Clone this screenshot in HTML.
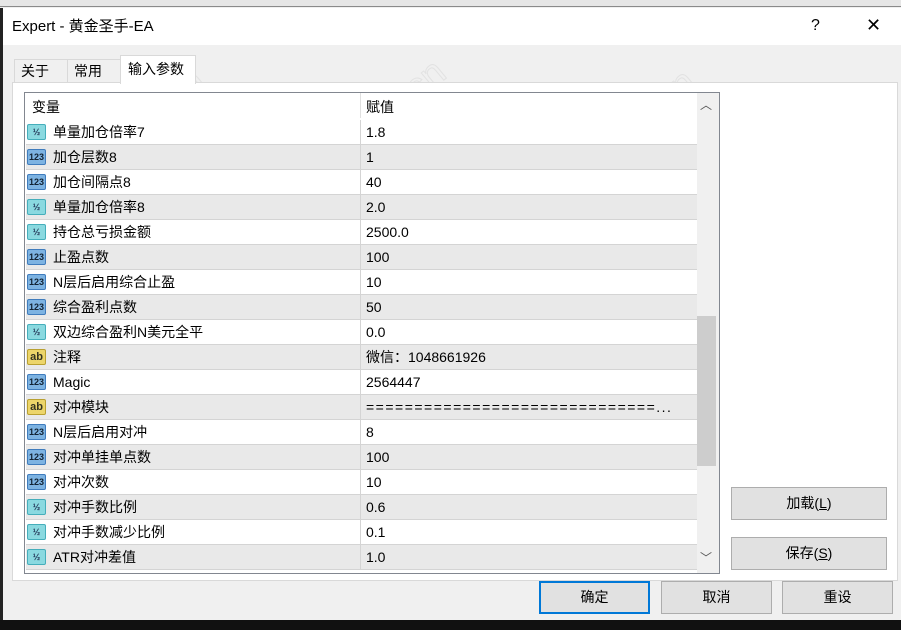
<!DOCTYPE html>
<html><head><meta charset="utf-8"><style>
*{box-sizing:border-box;margin:0;padding:0}
html,body{width:901px;height:630px;overflow:hidden}
body{position:relative;background:#f0f0f0;font-family:"Liberation Sans","Noto Sans CJK SC",sans-serif;font-size:14px;color:#000;line-height:1.2}
.abs{position:absolute}
.wm{position:absolute;font-size:38px;font-family:"Liberation Sans",sans-serif;color:transparent;-webkit-text-stroke:1px #e2e2e2;transform:rotate(-40deg);white-space:nowrap;pointer-events:none}
.row{position:absolute;left:26px;width:671px;height:25px;border-bottom:1px solid #d4d4d4;line-height:24px}
.row.g{background:#e9e9e9}
.row .n{position:absolute;left:27px;top:0;white-space:nowrap}
.row .v{position:absolute;left:340px;top:0;white-space:nowrap}
.row .d{position:absolute;left:334px;top:0;width:1px;height:25px;background:#d4d4d4}
.ic{position:absolute;left:1px;top:4px;width:19px;height:16px;border-radius:2px;font-size:9px;font-weight:bold;text-align:center;line-height:14px;font-family:"Liberation Sans",sans-serif}
.h{background:#8ad9e0;border:1px solid #45aebb;color:#235}
.n1{background:#7db3e2;border:1px solid #3f7cbd;color:#123}
.ab{background:#ecd56a;border:1px solid #b9a030;color:#332;font-size:11px}
.btn{position:absolute;background:#e1e1e1;border:1px solid #adadad;text-align:center;line-height:30px;font-size:14px}
.t{position:absolute;line-height:20px;white-space:nowrap}
</style></head><body>
<div class="wm" style="left:50px;top:110px">EAHub.cn</div>
<div class="wm" style="left:290px;top:100px">EAHub.cn</div>
<div class="wm" style="left:540px;top:110px">EAHub.cn</div>
<div class="wm" style="left:770px;top:110px">EAHub</div>
<div class="abs" style="left:0;top:0;width:901px;height:7px;background:#e6e6e6;border-bottom:1px solid #8a8a8a"></div>
<div class="abs" style="left:0;top:8px;width:3px;height:622px;background:#222"></div>
<div class="abs" style="left:3px;top:8px;width:898px;height:37px;background:#fff"></div>
<div class="t" style="left:12px;top:17px;font-size:15px">Expert - 黄金圣手-EA</div>
<div class="t" style="left:811px;top:16px;font-size:16px">?</div>
<div class="t" style="left:866px;top:15px;font-size:18px;font-weight:200">✕</div>
<div class="abs" style="left:14px;top:59px;width:54px;height:24px;border:1px solid #d9d9d9;border-bottom:none;background:#f0f0f0"></div>
<div class="t" style="left:21px;top:61px">关于</div>
<div class="abs" style="left:67px;top:59px;width:54px;height:24px;border:1px solid #d9d9d9;border-bottom:none;background:#f0f0f0"></div>
<div class="t" style="left:74px;top:61px">常用</div>
<div class="abs" style="left:12px;top:82px;width:886px;height:499px;background:#fff;border:1px solid #d9d9d9"></div>
<div class="abs" style="left:120px;top:55px;width:76px;height:29px;background:#fff;border:1px solid #d9d9d9;border-bottom:none"></div>
<div class="t" style="left:128px;top:59px">输入参数</div>
<div class="abs" style="left:24px;top:92px;width:696px;height:482px;border:1px solid #828790;background:#fff"></div>
<div class="t" style="left:32px;top:97px">变量</div>
<div class="abs" style="left:360px;top:93px;width:1px;height:25px;background:#e0e0e0"></div>
<div class="t" style="left:366px;top:97px">赋值</div>
<div class="row" style="top:120px"><span class="ic h">½</span><span class="n">单量加仓倍率7</span><span class="d"></span><span class="v">1.8</span></div>
<div class="row g" style="top:145px"><span class="ic n1">123</span><span class="n">加仓层数8</span><span class="d"></span><span class="v">1</span></div>
<div class="row" style="top:170px"><span class="ic n1">123</span><span class="n">加仓间隔点8</span><span class="d"></span><span class="v">40</span></div>
<div class="row g" style="top:195px"><span class="ic h">½</span><span class="n">单量加仓倍率8</span><span class="d"></span><span class="v">2.0</span></div>
<div class="row" style="top:220px"><span class="ic h">½</span><span class="n">持仓总亏损金额</span><span class="d"></span><span class="v">2500.0</span></div>
<div class="row g" style="top:245px"><span class="ic n1">123</span><span class="n">止盈点数</span><span class="d"></span><span class="v">100</span></div>
<div class="row" style="top:270px"><span class="ic n1">123</span><span class="n">N层后启用综合止盈</span><span class="d"></span><span class="v">10</span></div>
<div class="row g" style="top:295px"><span class="ic n1">123</span><span class="n">综合盈利点数</span><span class="d"></span><span class="v">50</span></div>
<div class="row" style="top:320px"><span class="ic h">½</span><span class="n">双边综合盈利N美元全平</span><span class="d"></span><span class="v">0.0</span></div>
<div class="row g" style="top:345px"><span class="ic ab">ab</span><span class="n">注释</span><span class="d"></span><span class="v">微信：1048661926</span></div>
<div class="row" style="top:370px"><span class="ic n1">123</span><span class="n">Magic</span><span class="d"></span><span class="v">2564447</span></div>
<div class="row g" style="top:395px"><span class="ic ab">ab</span><span class="n">对冲模块</span><span class="d"></span><span class="v" style="letter-spacing:1.5px">==============================...</span></div>
<div class="row" style="top:420px"><span class="ic n1">123</span><span class="n">N层后启用对冲</span><span class="d"></span><span class="v">8</span></div>
<div class="row g" style="top:445px"><span class="ic n1">123</span><span class="n">对冲单挂单点数</span><span class="d"></span><span class="v">100</span></div>
<div class="row" style="top:470px"><span class="ic n1">123</span><span class="n">对冲次数</span><span class="d"></span><span class="v">10</span></div>
<div class="row g" style="top:495px"><span class="ic h">½</span><span class="n">对冲手数比例</span><span class="d"></span><span class="v">0.6</span></div>
<div class="row" style="top:520px"><span class="ic h">½</span><span class="n">对冲手数减少比例</span><span class="d"></span><span class="v">0.1</span></div>
<div class="row g" style="top:545px"><span class="ic h">½</span><span class="n">ATR对冲差值</span><span class="d"></span><span class="v">1.0</span></div>
<div class="abs" style="left:697px;top:93px;width:22px;height:480px;background:#f0f0f0"></div>
<div class="abs" style="left:697px;top:316px;width:19px;height:150px;background:#cdcdcd"></div>
<div class="t" style="left:700px;top:95px;font-size:12px;color:#555">︿</div>
<div class="t" style="left:700px;top:548px;font-size:12px;color:#555">﹀</div>
<div class="btn" style="left:731px;top:487px;width:156px;height:33px">加载(<u>L</u>)</div>
<div class="btn" style="left:731px;top:537px;width:156px;height:33px">保存(<u>S</u>)</div>
<div class="btn" style="left:539px;top:581px;width:111px;height:33px;border:2px solid #0078d7;line-height:29px">确定</div>
<div class="btn" style="left:661px;top:581px;width:111px;height:33px">取消</div>
<div class="btn" style="left:782px;top:581px;width:111px;height:33px">重设</div>
<div class="abs" style="left:0;top:620px;width:901px;height:10px;background:#111"></div>
</body></html>
